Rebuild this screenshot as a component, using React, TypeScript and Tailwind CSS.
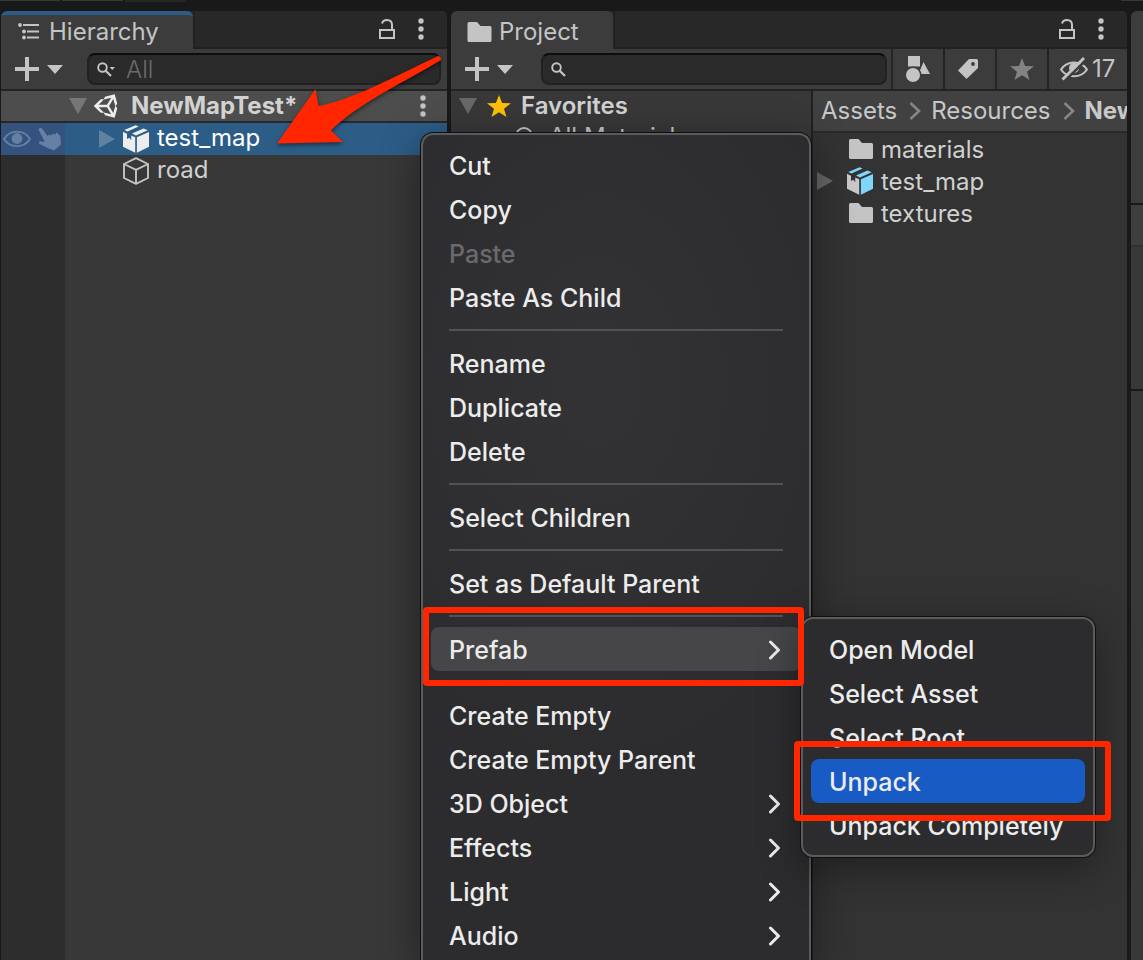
import type { ReactNode } from "react";
import { FaUnity } from "react-icons/fa";

function Kebab() {
  return (
    <svg width="6" height="22" viewBox="0 0 6 22" fill="#c4c4c4" aria-hidden="true">
      <circle cx="3" cy="3" r="2.7" />
      <circle cx="3" cy="11" r="2.7" />
      <circle cx="3" cy="19" r="2.7" />
    </svg>
  );
}

function Lock() {
  return (
    <svg width="16" height="20" viewBox="0 0 16 20" fill="none" stroke="#c4c4c4" strokeWidth="2" aria-hidden="true">
      <rect x="1" y="11" width="14" height="8" />
      <path d="M3 4.5C3.6 2.200 5.600 1 8 1c3.200 0 5 2 5 5v5" />
    </svg>
  );
}

function HierarchyIcon() {
  return (
    <svg width="22" height="18" viewBox="0 0 22 18" fill="#c4c4c4" aria-hidden="true">
      <circle cx="2" cy="2" r="1.900" />
      <circle cx="6" cy="8.500" r="1.900" />
      <circle cx="6" cy="14.500" r="1.900" />
      <path d="M5 1h16v2H5zM9 7.500h12v2H9zM9 13.500h12v2H9z" />
    </svg>
  );
}

function Folder({ small = false }: { small?: boolean }) {
  return (
    <svg width={small ? 24 : 25} height="20" viewBox="0 0 24 20" fill="#c4c4c4" aria-hidden="true">
      <path d="M0 1.500Q0 0 1.500 0H9.500L13 4H22.500Q24 4 24 5.500V18.500Q24 20 22.500 20H1.500Q0 20 0 18.500Z" />
    </svg>
  );
}

function Triangle({ down = false, color }: { down?: boolean; color: string }) {
  return down ? (
    <svg width="18" height="16" viewBox="0 0 18 16" fill={color} aria-hidden="true">
      <path d="M0 0H18L9 16Z" />
    </svg>
  ) : (
    <svg width="16" height="18" viewBox="0 0 16 18" fill={color} aria-hidden="true">
      <path d="M0 0V18L16 9Z" />
    </svg>
  );
}

function PrefabBox({ left, right }: { left: string; right: string }) {
  return (
    <svg width="26" height="28" viewBox="0 0 26 28" aria-hidden="true">
      <path fill={right} d="M1.300 5 12.600.2 15.600 1.500 4.500 6.600ZM9 8.500 20.500 3.400 24.700 5.300 13 10.400Z" />
      <path fill={left} d="M0 6.800 4 8.700V14L6.400 12.800 8.200 15.200V10.500L12.200 12.300V27.800L0 21.800Z" />
      <path fill={right} d="M13.900 12.300 26 6.900V21.800L13.900 27.800Z" />
    </svg>
  );
}

function CubeOutline() {
  return (
    <svg width="26" height="28" viewBox="0 0 26 28" fill="none" stroke="#c4c4c4" strokeWidth="1.900" strokeLinejoin="round" aria-hidden="true">
      <path d="M13 1.200 25 7V21L13 26.800 1 21V7ZM1 7 13 12.800 25 7M13 12.800V26.800" />
    </svg>
  );
}

function Eye() {
  return (
    <svg width="28" height="18" viewBox="0 0 28 18" aria-hidden="true">
      <path d="M1 9C7-.8 21-.8 27 9 21 18.500 7 18.500 1 9Z" fill="none" stroke="#657fa5" strokeWidth="1.900" />
      <circle cx="14" cy="8.500" r="5.400" fill="#657fa5" />
    </svg>
  );
}

function Hand() {
  return (
    <svg width="24" height="24" viewBox="0 0 24 24" fill="#657fa5" aria-hidden="true">
      <path d="M1 1.500Q2.500.2 4 1.500L9.500 9 11 7.500 13 8.500 14.500 6.800 17 7.800 18.500 5.500Q21.500 7 22.500 10L23 17.500 16 23.500 8.500 20.500 1 16.500Q0 14.800 2 14.300L6.800 15 1 3.500Q.3 2.500 1 1.500Z" />
    </svg>
  );
}

function SearchIcon({ menu = false }: { menu?: boolean }) {
  return (
    <svg width="18" height="16" viewBox="0 0 18 16" fill="none" stroke="#c4c4c4" className="mt-[2px] shrink-0" aria-hidden="true">
      <circle cx="5.500" cy="5.500" r="4.300" strokeWidth="1.900" />
      <path d="M8.700 8.700 14 14" strokeWidth="2.300" />
      {menu && <path d="M12.500 5H18L15.250 8Z" fill="#c4c4c4" stroke="none" />}
    </svg>
  );
}

function Star({ color }: { color: string }) {
  return (
    <svg width="24" height="22" viewBox="0 0 24 22" fill={color} aria-hidden="true">
      <path d="M12 0 15.100 7.900 24 8.300 17 13.700 19.500 22 12 17.300 4.500 22 7 13.700 0 8.300 8.900 7.900Z" />
    </svg>
  );
}

function Shapes() {
  return (
    <svg width="26" height="26" viewBox="0 0 26 26" fill="#c4c4c4" aria-hidden="true">
      <path d="M3 0H15V10.500H3ZM18.500 6 25 18H13.500Z" />
      <circle cx="8" cy="19" r="8.500" fill="#3c3c3c" />
      <circle cx="8" cy="19" r="7" />
    </svg>
  );
}

function Tag() {
  return (
    <svg width="20" height="20" viewBox="0 0 20 20" className="mr-1" aria-hidden="true">
      <path fill="#c4c4c4" d="M11 0H18.500Q20 0 20 1.500V9L8.500 20 0 11.500Z" />
      <circle cx="15" cy="5" r="1.900" fill="#3c3c3c" />
    </svg>
  );
}

function HiddenEye() {
  return (
    <svg width="28" height="24" viewBox="0 0 28 24" fill="none" stroke="#c4c4c4" aria-hidden="true">
      <path d="M1 12.500C7 3 21 3 27 12.500 21 21.500 7 21.500 1 12.500Z" strokeWidth="2" />
      <circle cx="14" cy="11" r="5" fill="#c4c4c4" stroke="none" />
      <path d="M4.500 24 26.500 2.500" stroke="#3c3c3c" strokeWidth="2.500" />
      <path d="M2.500 22.500 24 1" strokeWidth="2.800" />
    </svg>
  );
}

function Crumb() {
  return (
    <svg width="12" height="18" viewBox="0 0 12 18" fill="none" stroke="#858585" strokeWidth="2.600" className="mr-[10px] ml-3 shrink-0" aria-hidden="true">
      <path d="M1.500 1 10 9 1.500 17" />
    </svg>
  );
}

function AddButton({ label }: { label: string }) {
  return (
    <button type="button" aria-label={label} className="flex shrink-0 items-center gap-2">
      <svg width="24" height="24" viewBox="0 0 24 24" fill="#c4c4c4" aria-hidden="true">
        <path d="M10 0h4v10h10v4H14v10h-4V14H0v-4h10z" />
      </svg>
      <svg width="16" height="9" viewBox="0 0 16 9" fill="#c4c4c4" aria-hidden="true">
        <path d="M0 0H16L8 9Z" />
      </svg>
    </button>
  );
}

function SearchField({ label, placeholder, menu }: { label: string; placeholder?: string; menu?: boolean }) {
  return (
    <label className="flex h-8 min-w-0 flex-1 items-center gap-2 rounded-lg border-2 border-[#212121] border-t-[#0d0d0d] bg-[#2a2a2a] px-2">
      <SearchIcon menu={menu} />
      <input
        type="text"
        aria-label={label}
        placeholder={placeholder}
        className="w-full min-w-0 bg-transparent pt-[2px] pl-[3px] text-2xl leading-7 font-light text-[#c4c4c4] outline-none placeholder:text-[#6c6c6c]"
      />
    </label>
  );
}

function TabBar({ tab, active = false, icon }: { tab: string; active?: boolean; icon: ReactNode }) {
  return (
    <div className="flex h-[38px] shrink-0 items-stretch rounded-t-md bg-[#282828]">
      <button
        type="button"
        className={
          active
            ? "flex w-48 items-center gap-[9px] rounded-t-md border-t-4 border-[#2c5d87] bg-[#3c3c3c] pl-[17px] text-2xl leading-8 text-[#c4c4c4]"
            : "flex w-[162px] items-center gap-[7px] rounded-t-md border-t-4 border-[#3c3c3c] bg-[#3c3c3c] pl-4 text-2xl leading-8 text-[#c4c4c4]"
        }
      >
        {icon}
        <span>{tab}</span>
      </button>
      <div className="flex flex-1 items-center justify-end gap-[23px] border-b-2 border-l-2 border-[#212121] pr-[23px]">
        <button type="button" aria-label={`Lock ${tab}`}>
          <Lock />
        </button>
        <button type="button" aria-label={`${tab} options`}>
          <Kebab />
        </button>
      </div>
    </div>
  );
}

function HierarchyPanel() {
  return (
    <section aria-label="Hierarchy" className="flex w-[446px] shrink-0 flex-col overflow-hidden rounded-t-md bg-[#383838]">
      <TabBar tab="Hierarchy" active icon={<HierarchyIcon />} />
      <div className="flex h-[42px] shrink-0 items-center gap-6 border-b-2 border-[#232323] bg-[#3c3c3c] pr-[6px] pl-[14px]">
        <AddButton label="Create" />
        <SearchField label="Search hierarchy" placeholder="All" menu />
      </div>
      <div className="flex h-8 shrink-0 items-center border-b-2 border-[#282828] bg-[#4d4d4d] pr-[21px] pl-[68px] text-[#d2d2d2]">
        <Triangle down color="#767676" />
        <FaUnity className="ml-[6px] size-[28px] text-[#ededed]" />
        <span className="ml-[10px] flex-1 text-2xl leading-7 font-bold">NewMapTest*</span>
        <button type="button" aria-label="Scene options">
          <Kebab />
        </button>
      </div>
      <div className="flex flex-1 flex-col text-2xl leading-7 text-[#d0d0d0]">
        <div className="flex h-8 shrink-0 items-center bg-[#2c5d87] text-white">
          <div className="flex h-8 w-16 items-center gap-[7px] bg-[#34527e] pl-[2px]">
            <Eye />
            <Hand />
          </div>
          <div className="flex items-center gap-2 pl-[34px]">
            <Triangle color="#5f839f" />
            <PrefabBox left="#ededed" right="#ededed" />
            <span className="pb-[2px]">test_map</span>
          </div>
        </div>
        <div className="flex flex-1">
          <div className="w-16 shrink-0 bg-[#2d2d2d]" />
          <div className="flex h-8 items-center gap-2 pl-[58px]">
            <CubeOutline />
            <span className="pb-[2px]">road</span>
          </div>
        </div>
      </div>
    </section>
  );
}

function ToolButton({ label, children }: { label: string; children: ReactNode }) {
  return (
    <button type="button" aria-label={label} className="flex h-10 w-[52px] shrink-0 items-center justify-center border-l-2 border-[#242424]">
      {children}
    </button>
  );
}

function ProjectPanel() {
  return (
    <section aria-label="Project" className="flex min-w-0 flex-1 flex-col overflow-hidden rounded-t-md bg-[#383838]">
      <TabBar tab="Project" icon={<Folder />} />
      <div className="flex h-[42px] shrink-0 items-center border-b-2 border-[#232323] bg-[#3c3c3c]">
        <div className="flex min-w-0 flex-1 items-center gap-7 pr-1 pl-[14px]">
          <AddButton label="Add asset" />
          <SearchField label="Search project" />
        </div>
        <ToolButton label="Search by type">
          <Shapes />
        </ToolButton>
        <ToolButton label="Search by label">
          <Tag />
        </ToolButton>
        <ToolButton label="Save search">
          <Star color="#828282" />
        </ToolButton>
        <button type="button" aria-label="17 hidden packages" className="flex h-10 w-20 shrink-0 items-center gap-1 border-l-2 border-[#242424] pl-[11px] text-2xl leading-7 text-[#c4c4c4]">
          <HiddenEye />
          <span>17</span>
        </button>
      </div>
      <div className="flex min-h-0 flex-1 text-2xl leading-7 text-[#c8c8c8]">
        <div className="w-[362px] shrink-0 overflow-hidden border-r-2 border-[#202020]">
          <div className="flex h-[30px] items-center gap-[10px] pl-2 text-[#d2d2d2]">
            <Triangle down color="#686868" />
            <Star color="#ffc107" />
            <span className="font-semibold">Favorites</span>
          </div>
          <div className="flex h-8 items-center gap-[10px] pl-[64px]">
            <svg width="24" height="24" viewBox="0 0 24 24" fill="none" stroke="#c4c4c4" strokeWidth="2" aria-hidden="true">
              <circle cx="9" cy="11" r="8" />
              <path d="m15 17 7 7" />
            </svg>
            <span>All Materials</span>
          </div>
        </div>
        <div className="flex min-w-0 flex-1 flex-col bg-[#333333]">
          <nav aria-label="Asset path" className="flex h-[42px] shrink-0 items-center overflow-hidden border-b-2 border-[#292929] bg-[#414141] pl-2 whitespace-nowrap">
            <a href="#assets">Assets</a>
            <Crumb />
            <a href="#resources">Resources</a>
            <Crumb />
            <a href="#new" className="font-bold">
              New
            </a>
          </nav>
          <ul className="text-[#d0d0d0]">
            <li className="flex h-8 items-center gap-2 pl-9">
              <Folder small />
              <span className="pt-[2px]">materials</span>
            </li>
            <li className="flex h-8 items-center pl-1">
              <Triangle color="#666666" />
              <span className="mr-2 ml-[14px]">
                <PrefabBox left="#c8c8c8" right="#7fd6fd" />
              </span>
              <span className="pt-[2px]">test_map</span>
            </li>
            <li className="flex h-8 items-center gap-2 pl-9">
              <Folder small />
              <span className="pt-[2px]">textures</span>
            </li>
          </ul>
        </div>
      </div>
    </section>
  );
}

function MenuItem({ label, submenu, disabled, tone }: { label: string; submenu?: boolean; disabled?: boolean; tone?: "open" | "selected" }) {
  const color = disabled ? "text-[#6a6a6c]" : "text-[#ececec]";
  const fill = tone === "open" ? "bg-[#464648]" : tone === "selected" ? "bg-[#195bc5]" : "";
  return (
    <button
      type="button"
      role="menuitem"
      disabled={disabled}
      className={`flex h-11 w-full shrink-0 items-center justify-between rounded-lg pt-[2px] pr-5 pl-[18px] text-left text-[25px] leading-8 font-medium ${color} ${fill}`}
    >
      <span>{label}</span>
      {submenu && (
        <svg width="14" height="20" viewBox="0 0 14 20" fill="none" stroke="#ececec" strokeWidth="3" strokeLinecap="round" strokeLinejoin="round" aria-hidden="true">
          <path d="M3.500 2 11.500 10 3.500 18" />
        </svg>
      )}
    </button>
  );
}

function Separator() {
  return (
    <div role="separator" className="flex h-[22px] shrink-0 items-center px-[18px]">
      <div className="h-[2px] w-full bg-[#525254]" />
    </div>
  );
}

function ContextMenu() {
  return (
    <div
      role="menu"
      aria-label="Object menu"
      className="absolute top-[133px] bottom-0 left-[421px] flex w-[390px] flex-col overflow-hidden rounded-t-xl border-2 border-b-0 border-[#5b5b5d] bg-[#2c2c2e] bg-[radial-gradient(ellipse_260px_380px_at_45%_30%,#333335,#2c2c2e)] p-2 shadow-[0_0_0_1px_#101010,0_10px_40px_rgba(0,0,0,0.45)]"
    >
      <MenuItem label="Cut" />
      <MenuItem label="Copy" />
      <MenuItem label="Paste" disabled />
      <MenuItem label="Paste As Child" />
      <Separator />
      <MenuItem label="Rename" />
      <MenuItem label="Duplicate" />
      <MenuItem label="Delete" />
      <Separator />
      <MenuItem label="Select Children" />
      <Separator />
      <MenuItem label="Set as Default Parent" />
      <Separator />
      <MenuItem label="Prefab" submenu tone="open" />
      <Separator />
      <MenuItem label="Create Empty" />
      <MenuItem label="Create Empty Parent" />
      <MenuItem label="3D Object" submenu />
      <MenuItem label="Effects" submenu />
      <MenuItem label="Light" submenu />
      <MenuItem label="Audio" submenu />
    </div>
  );
}

function PrefabMenu() {
  return (
    <div
      role="menu"
      aria-label="Prefab"
      className="absolute top-[617px] left-[801px] flex w-[294px] flex-col rounded-xl border-2 border-[#5b5b5d] bg-[#2c2c2e] p-2 shadow-[0_0_0_1px_#101010,0_10px_40px_rgba(0,0,0,0.4)]"
    >
      <MenuItem label="Open Model" />
      <MenuItem label="Select Asset" />
      <MenuItem label="Select Root" />
      <MenuItem label="Unpack" tone="selected" />
      <MenuItem label="Unpack Completely" />
    </div>
  );
}

function Annotations() {
  return (
    <div className="pointer-events-none">
      <svg width="172" height="96" viewBox="0 0 172 96" className="absolute top-[52px] left-[273px] drop-shadow-[0_2px_2px_rgba(0,0,0,0.5)]" aria-hidden="true">
        <path fill="#ff2600" d="M4 91.500 42.500 37 45.500 54C78 48 115 28 165 4Q168.500 4.500 168 8C135 28 84 52 58 78.500L70 90Z" />
      </svg>
      <div className="absolute top-[607px] left-[423px] h-[79px] w-[381px] rounded-sm border-6 border-[#ff2600]" />
      <div className="absolute top-[741px] left-[794px] h-20 w-[317px] rounded-sm border-6 border-[#ff2600]" />
    </div>
  );
}

export default function App() {
  return (
    <main className="relative flex h-screen flex-col overflow-hidden bg-[#191919] font-['Inter','Liberation_Sans',sans-serif]">
      <div className="flex h-[11px] shrink-0 items-start gap-[2px]">
        <div className="h-px w-[60px] bg-[#383838]" />
        <div className="h-px w-[61px] bg-[#383838]" />
        <div className="h-[2px] w-[61px] bg-[#262626]" />
        <div className="ml-auto h-px w-[22px] bg-[#383838]" />
      </div>
      <div className="flex min-h-0 flex-1 gap-1 pl-px">
        <HierarchyPanel />
        <ProjectPanel />
        <aside aria-label="Inspector" className="flex w-3 shrink-0 flex-col rounded-tl-md bg-[#383838]">
          <div className="h-[194px] rounded-tl-md border-b-2 border-[#191919] bg-[#3c3c3c]" />
          <div className="h-[42px] border-b-2 border-[#303030] bg-[#3e3e3e]" />
          <div className="h-36 border-b-2 border-[#191919]" />
        </aside>
      </div>
      <ContextMenu />
      <PrefabMenu />
      <Annotations />
    </main>
  );
}
